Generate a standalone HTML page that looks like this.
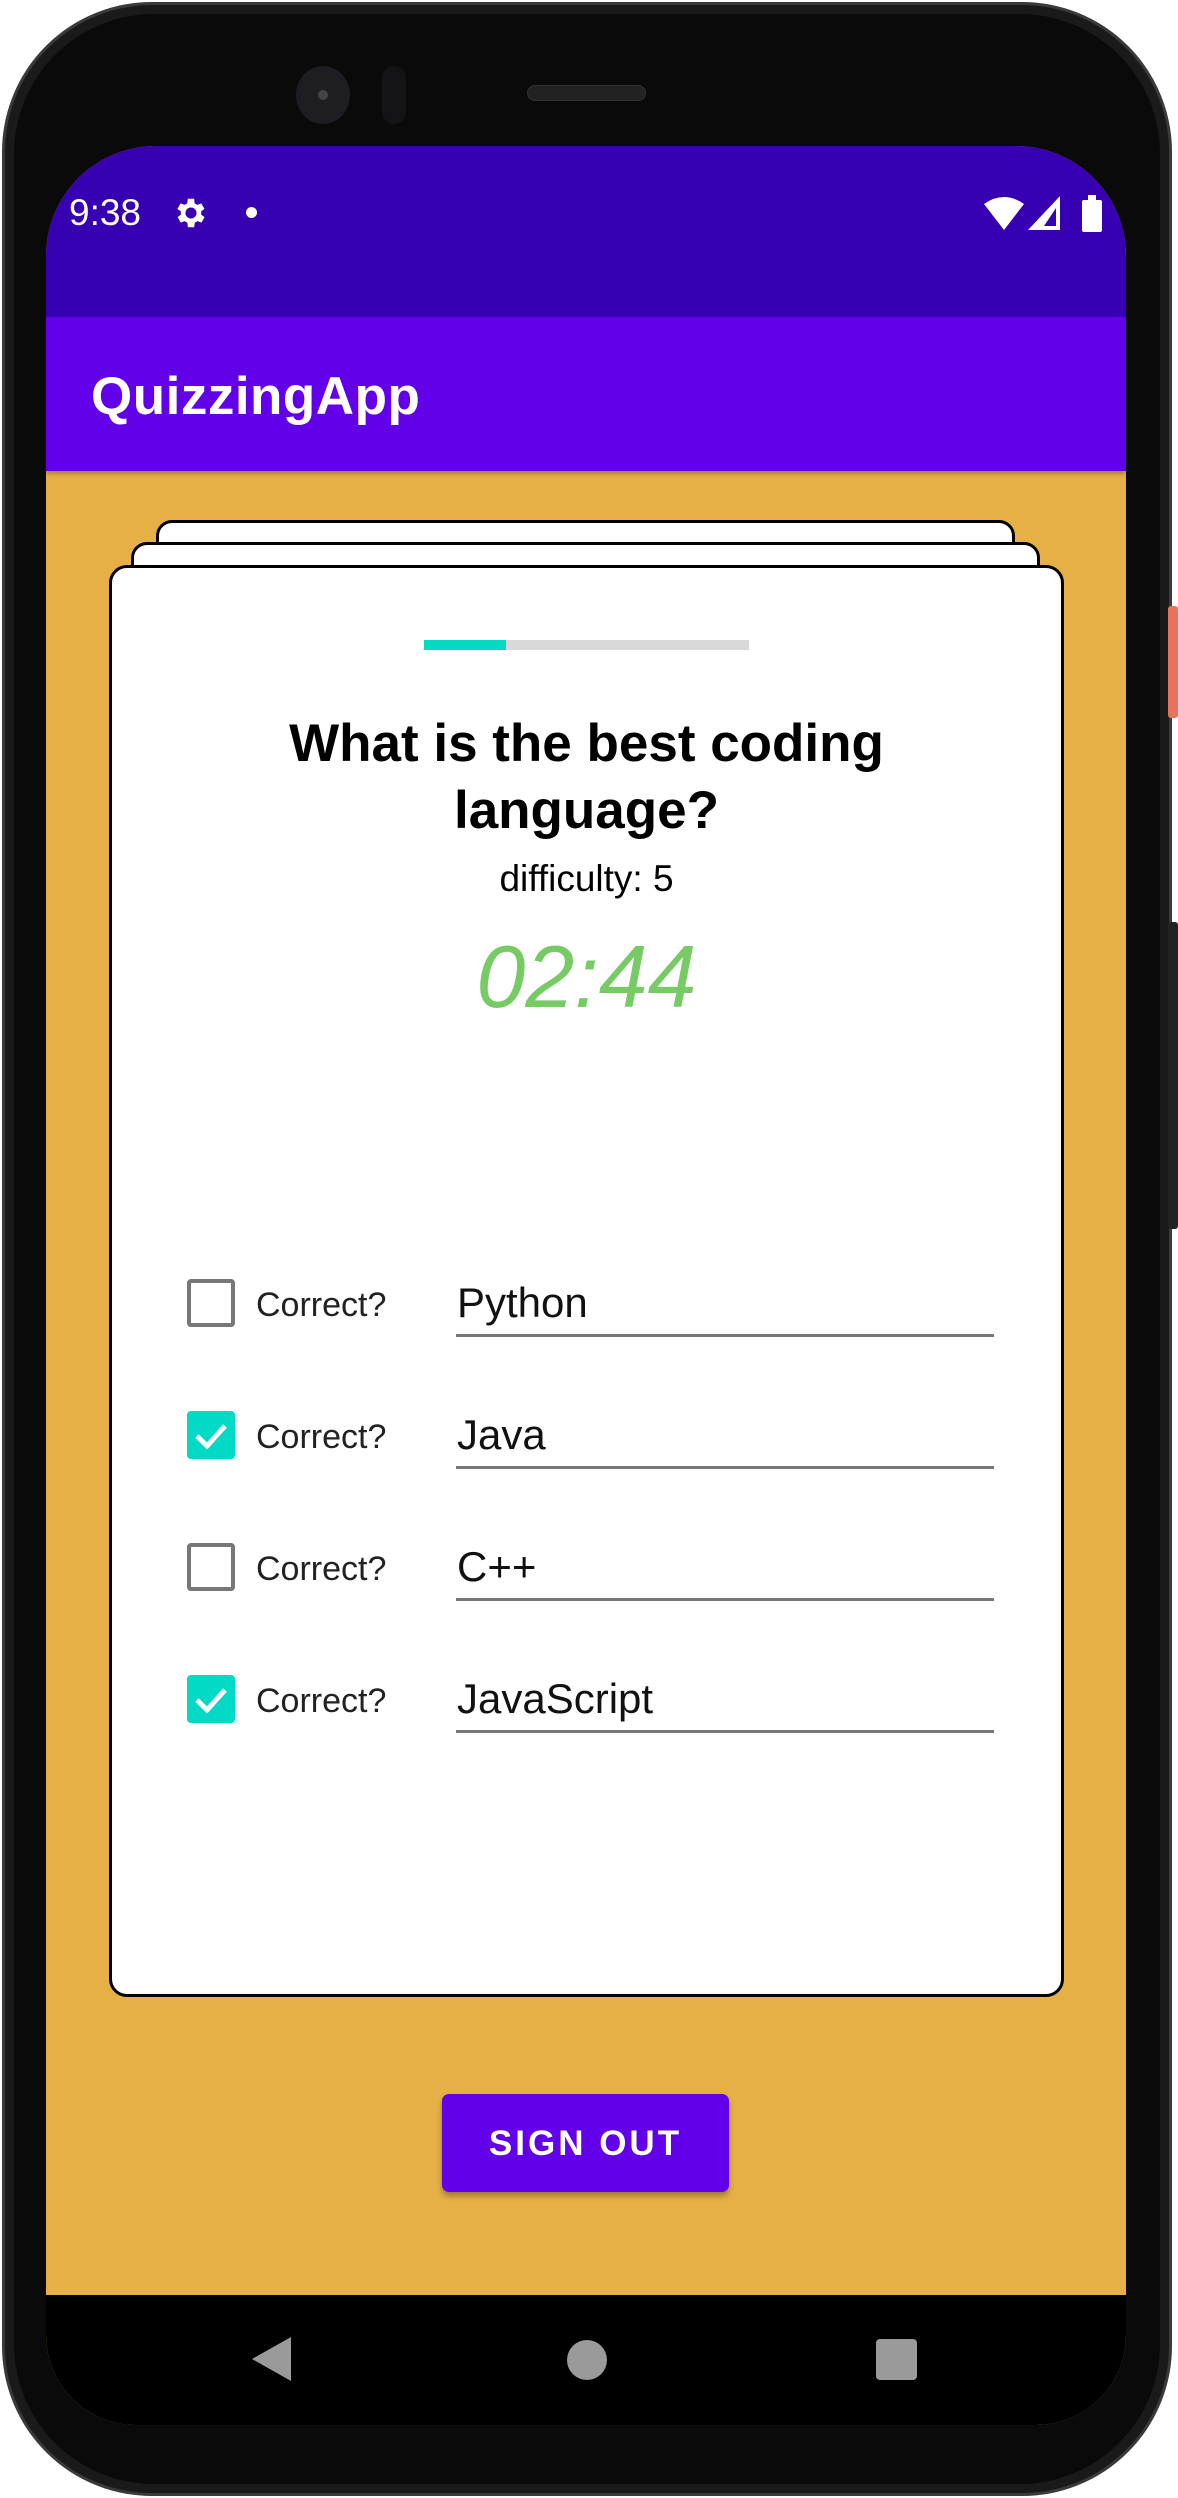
<!DOCTYPE html>
<html><head><style>
*{margin:0;padding:0;box-sizing:border-box}
body{width:1178px;height:2498px;background:#fff;position:relative;overflow:hidden;font-family:"Liberation Sans",sans-serif}
.abs{position:absolute}
</style></head><body>
<div class="abs" style="left:2px;top:2px;width:1170px;height:2494px;border-radius:150px;background:#1a1a1a;border:3px solid #3a3a3a"></div>
<div class="abs" style="left:14px;top:14px;width:1146px;height:2470px;border-radius:140px;background:#0a0a0b"></div>
<div class="abs" style="left:1168px;top:606px;width:10px;height:112px;background:#e8735a;border-radius:3px"></div>
<div class="abs" style="left:1168px;top:922px;width:10px;height:307px;background:#222;border-radius:3px"></div>
<div class="abs" style="left:296px;top:66px;width:54px;height:58px;border-radius:50%;background:#1d1d22"></div>
<div class="abs" style="left:318px;top:90px;width:10px;height:10px;border-radius:50%;background:#444"></div>
<div class="abs" style="left:382px;top:66px;width:24px;height:58px;border-radius:12px;background:#141416"></div>
<div class="abs" style="left:527px;top:85px;width:119px;height:16px;border-radius:8px;background:#222;border:1px solid #333"></div>
<div class="abs" style="left:46px;top:146px;width:1080px;height:2279px;border-radius:110px 110px 90px 90px;overflow:hidden;background:#e6b046">
  <div class="abs" style="left:0;top:0;width:1080px;height:171px;background:#3700b3"></div>
  <div class="abs" style="left:23px;top:46px;color:#fff;font-size:37px">9:38</div>
  <svg class="abs" style="left:126px;top:48px" width="38" height="38" viewBox="0 0 24 24"><path fill="#fff" d="M19.4 13a7.5 7.5 0 0 0 0-2l2.1-1.6-2-3.5-2.5 1a7 7 0 0 0-1.7-1L15 3h-4l-.4 2.9a7 7 0 0 0-1.7 1l-2.5-1-2 3.5L6.6 11a7.5 7.5 0 0 0 0 2l-2.1 1.6 2 3.5 2.5-1a7 7 0 0 0 1.7 1L11 21h4l.4-2.9a7 7 0 0 0 1.7-1l2.5 1 2-3.5zM13 15.5A3.5 3.5 0 1 1 13 8.5a3.5 3.5 0 0 1 0 7z" transform="translate(-1 0)"/></svg>
  <div class="abs" style="left:200px;top:61px;width:11px;height:11px;border-radius:50%;background:#fff"></div>
  <svg class="abs" style="left:938px;top:50px" width="40" height="36" viewBox="0 0 40 36"><path fill="#fff" d="M0 8 Q20 -6 40 8 L20 34Z"/></svg>
  <svg class="abs" style="left:982px;top:50px" width="34" height="36" viewBox="0 0 34 36"><path fill="#fff" d="M32 0 V34 H0Z"/><path fill="#3700b3" d="M28 12 V30 H16Z"/></svg>
  <div class="abs" style="left:1036px;top:54px;width:20px;height:32px;background:#fff;border-radius:2px"></div>
  <div class="abs" style="left:1042px;top:49px;width:8px;height:6px;background:#fff"></div>
  <div class="abs" style="left:0;top:171px;width:1080px;height:154px;background:#6200ea;box-shadow:0 3px 4px rgba(0,0,0,.25)"></div>
  <div class="abs" style="left:45px;top:220px;color:#fff;font-size:53px;font-weight:bold;letter-spacing:0.5px;-webkit-text-stroke:0px">QuizzingApp</div>
  <div class="abs" style="left:110px;top:374px;width:859px;height:60px;background:#fff;border:3px solid #000;border-radius:16px"></div>
  <div class="abs" style="left:85px;top:396px;width:909px;height:60px;background:#fff;border:3px solid #000;border-radius:16px"></div>
  <div class="abs" style="left:63px;top:419px;width:955px;height:1432px;background:#fff;border:3px solid #000;border-radius:18px"></div>
  <div class="abs" style="left:378px;top:494px;width:82px;height:10px;background:#03dac5"></div>
  <div class="abs" style="left:460px;top:494px;width:243px;height:10px;background:#d9d9d9"></div>
  <div class="abs" style="left:63px;top:564px;width:955px;text-align:center;font-size:53px;font-weight:bold;line-height:67px;color:#000">What is the best coding<br>language?</div>
  <div class="abs" style="left:63px;top:712px;width:955px;text-align:center;font-size:37px;color:#000">difficulty: 5</div>
  <div class="abs" style="left:63px;top:780px;width:955px;text-align:center;font-size:88px;font-style:italic;color:#77cb65">02:44</div>
  <div class="abs" style="left:0;top:1132px;width:1080px">
    <div class="abs" style="left:141px;top:1px;width:48px;height:48px;border:4px solid #777;border-radius:4px"></div>
    <div class="abs" style="left:210px;top:8px;font-size:34px;color:#222">Correct?</div>
    <div class="abs" style="left:411px;top:1px;font-size:42px;color:#111">Python</div>
    <div class="abs" style="left:410px;top:56px;width:538px;height:3px;background:#777"></div>
  </div>
  <div class="abs" style="left:0;top:1264px;width:1080px">
    <div class="abs" style="left:141px;top:1px;width:48px;height:48px;background:#03dac5;border-radius:4px"></div>
    <svg class="abs" style="left:141px;top:1px" width="48" height="48"><path d="M10 25 L20 35 L38 15" stroke="#fff" stroke-width="5" fill="none"/></svg>
    <div class="abs" style="left:210px;top:8px;font-size:34px;color:#222">Correct?</div>
    <div class="abs" style="left:411px;top:1px;font-size:42px;color:#111">Java</div>
    <div class="abs" style="left:410px;top:56px;width:538px;height:3px;background:#777"></div>
  </div>
  <div class="abs" style="left:0;top:1396px;width:1080px">
    <div class="abs" style="left:141px;top:1px;width:48px;height:48px;border:4px solid #777;border-radius:4px"></div>
    <div class="abs" style="left:210px;top:8px;font-size:34px;color:#222">Correct?</div>
    <div class="abs" style="left:411px;top:1px;font-size:42px;color:#111">C++</div>
    <div class="abs" style="left:410px;top:56px;width:538px;height:3px;background:#777"></div>
  </div>
  <div class="abs" style="left:0;top:1528px;width:1080px">
    <div class="abs" style="left:141px;top:1px;width:48px;height:48px;background:#03dac5;border-radius:4px"></div>
    <svg class="abs" style="left:141px;top:1px" width="48" height="48"><path d="M10 25 L20 35 L38 15" stroke="#fff" stroke-width="5" fill="none"/></svg>
    <div class="abs" style="left:210px;top:8px;font-size:34px;color:#222">Correct?</div>
    <div class="abs" style="left:411px;top:1px;font-size:42px;color:#111">JavaScript</div>
    <div class="abs" style="left:410px;top:56px;width:538px;height:3px;background:#777"></div>
  </div>
  <div class="abs" style="left:396px;top:1948px;width:287px;height:98px;background:#6200ea;border-radius:7px;box-shadow:0 4px 6px rgba(0,0,0,.3);color:#fff;font-size:35px;font-weight:bold;letter-spacing:3px;text-align:center;line-height:100px">SIGN OUT</div>
  <div class="abs" style="left:0;top:2149px;width:1080px;height:130px;background:#000"></div>
  <svg class="abs" style="left:206px;top:2190px" width="40" height="46"><path d="M39 1 V45 L0 23Z" fill="#9a9a9a"/></svg>
  <div class="abs" style="left:521px;top:2194px;width:40px;height:40px;border-radius:50%;background:#9a9a9a"></div>
  <div class="abs" style="left:830px;top:2193px;width:41px;height:41px;border-radius:4px;background:#9a9a9a"></div>
</div>
</body></html>
